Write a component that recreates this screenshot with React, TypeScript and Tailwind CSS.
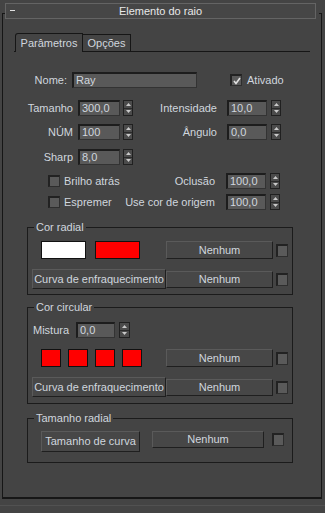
import React from "react";

const ink = "text-[#d0d6de]";

function Spinner({ className = "" }: { className?: string }) {
  return (
    <div className={`flex h-[16px] w-[10px] flex-col border border-[#202020] bg-[#4b4b4b] ${className}`}>
      <div className="flex flex-1 items-center justify-center border-b border-[#2a2a2a]">
        <svg width="5" height="3" viewBox="0 0 5 3">
          <path d="M0 3L2.5 0L5 3Z" fill="#c9c9c9" />
        </svg>
      </div>
      <div className="flex flex-1 items-center justify-center">
        <svg width="5" height="3" viewBox="0 0 5 3">
          <path d="M0 0L5 0L2.5 3Z" fill="#c9c9c9" />
        </svg>
      </div>
    </div>
  );
}

function Field({ value, className = "" }: { value: string; className?: string }) {
  return (
    <div
      className={`flex h-[16px] items-center border border-t-2 border-l-2 border-[#1d1d1d] border-r-[#333] border-b-[#333] bg-[#595959] pl-[2px] ${ink} ${className}`}
    >
      {value}
    </div>
  );
}

function Check({ checked = false, className = "" }: { checked?: boolean; className?: string }) {
  return (
    <div
      className={`flex h-[12px] w-[12px] items-center justify-center border border-t-2 border-l-2 border-[#222] border-r-[#2e2e2e] border-b-[#2e2e2e] bg-[#5a5a5a] ${className}`}
    >
      {checked && (
        <svg width="8" height="8" viewBox="0 0 8 8">
          <path d="M1 4L3 6.5L7 1" stroke="#e0e0e0" strokeWidth="1.6" fill="none" />
        </svg>
      )}
    </div>
  );
}

function Btn({ label, className = "" }: { label: string; className?: string }) {
  return (
    <div
      className={`flex items-center justify-center border border-[#5a5a5a] border-r-[#1f1f1f] border-b-[#1f1f1f] bg-[#474747] ${ink} ${className}`}
    >
      {label}
    </div>
  );
}

function Group({ title, className = "", children }: { title: string; className?: string; children: React.ReactNode }) {
  return (
    <div className={`relative ml-[24px] w-[266px] border border-[#1b1b1b] ${className}`}>
      <span className={`absolute -top-[8px] left-[6px] bg-[#444] px-[2px] leading-[14px] ${ink}`}>{title}</span>
      {children}
    </div>
  );
}

export default function App() {
  return (
    <div className="h-[513px] w-[325px] overflow-hidden bg-[#444] pt-[3px] font-['Liberation_Sans',Arial,sans-serif] text-[11px]">
      {/* title bar */}
      <div className="relative z-10 ml-[5px] flex h-[16px] w-[311px] items-center justify-center border border-[#646464] bg-[#464646]">
        <span className="absolute left-[4px] top-[6px] h-[1px] w-[5px] bg-[#e0e0e0]" />
        <span className="text-[#e8e8e8]">Elemento do raio</span>
      </div>

      {/* frame */}
      <div className="relative -mt-[6px] ml-[2px] h-[486px] w-[320px] border-x border-b-2 border-[#161616] pt-[20px]">
        <span className="absolute -left-[1px] top-0 h-[1px] w-[4px] bg-[#161616]" />
        <span className="absolute -right-[1px] top-0 h-[1px] w-[3px] bg-[#161616]" />

        {/* tabs */}
        <div className="ml-[11px] flex h-[19px] w-[296px] items-end border-b border-[#161616] pl-[1px]">
          <div className={`-mb-[1px] flex h-[19px] w-[68px] items-center justify-center rounded-tl-[3px] border-x border-t border-[#161616] bg-[#444] ${ink}`}>
            Parâmetros
          </div>
          <div className={`flex h-[17px] w-[48px] items-center justify-center border-r border-t border-[#161616] ${ink}`}>
            Opções
          </div>
        </div>

        {/* Nome */}
        <div className="mt-[20px] flex h-[16px] items-center">
          <span className={`w-[64px] text-right ${ink}`}>Nome:</span>
          <Field value="Ray" className="ml-[5px] w-[125px]" />
          <Check checked className="ml-[33px]" />
          <span className={`ml-[5px] ${ink}`}>Ativado</span>
        </div>

        {/* Tamanho / Intensidade */}
        <div className="mt-[12px] flex h-[16px] items-center">
          <span className={`w-[70px] text-right ${ink}`}>Tamanho</span>
          <Field value="300,0" className="ml-[5px] w-[42px]" />
          <Spinner className="ml-[3px]" />
          <span className={`w-[84px] text-right ${ink}`}>Intensidade</span>
          <Field value="10,0" className="ml-[10px] w-[40px]" />
          <Spinner className="ml-[4px]" />
        </div>

        {/* NÚM / Ângulo */}
        <div className="mt-[8px] flex h-[16px] items-center">
          <span className={`w-[70px] text-right ${ink}`}>NÚM</span>
          <Field value="100" className="ml-[5px] w-[42px]" />
          <Spinner className="ml-[3px]" />
          <span className={`w-[84px] text-right ${ink}`}>Ângulo</span>
          <Field value="0,0" className="ml-[10px] w-[40px]" />
          <Spinner className="ml-[4px]" />
        </div>

        {/* Sharp */}
        <div className="mt-[9px] flex h-[16px] items-center">
          <span className={`w-[70px] text-right ${ink}`}>Sharp</span>
          <Field value="8,0" className="ml-[5px] w-[42px]" />
          <Spinner className="ml-[3px]" />
        </div>

        {/* Brilho atrás / Oclusão */}
        <div className="mt-[8px] flex h-[16px] items-center">
          <div className="flex w-[122px] items-center">
            <Check className="ml-[45px]" />
            <span className={`ml-[4px] ${ink}`}>Brilho atrás</span>
          </div>
          <span className={`w-[90px] whitespace-nowrap text-right ${ink}`}>Oclusão</span>
          <Field value="100,0" className="ml-[11px] w-[40px]" />
          <Spinner className="ml-[4px]" />
        </div>

        {/* Espremer / Use cor de origem */}
        <div className="mt-[5px] flex h-[16px] items-center">
          <div className="flex w-[122px] items-center">
            <Check className="ml-[45px]" />
            <span className={`ml-[4px] ${ink}`}>Espremer</span>
          </div>
          <span className={`w-[90px] whitespace-nowrap text-right ${ink}`}>Use cor de origem</span>
          <Field value="100,0" className="ml-[11px] w-[40px]" />
          <Spinner className="ml-[4px]" />
        </div>

        {/* Cor radial */}
        <Group title="Cor radial" className="mt-[17px] pb-[5px] pt-[13px]">
          <div className="flex h-[18px] items-center">
            <div className="ml-[13px] h-[18px] w-[45px] border border-[#111] bg-white" />
            <div className="ml-[9px] h-[18px] w-[45px] border border-[#111] bg-[#ff0000]" />
            <Btn label="Nenhum" className="ml-[26px] h-[18px] w-[107px]" />
            <Check className="ml-[3px] h-[13px]" />
          </div>
          <div className="mt-[10px] flex h-[20px] items-center">
            <Btn label="Curva de enfraquecimento" className="ml-[4px] h-[20px] w-[134px] whitespace-nowrap" />
            <Btn label="Nenhum" className="h-[17px] w-[107px]" />
            <Check className="ml-[3px] h-[13px]" />
          </div>
        </Group>

        {/* Cor circular */}
        <Group title="Cor circular" className="mt-[12px] pb-[6px] pt-[14px]">
          <div className="flex h-[16px] items-center">
            <span className={`ml-[5px] w-[38px] ${ink}`}>Mistura</span>
            <Field value="0,0" className="ml-[5px] w-[39px]" />
            <Spinner className="ml-[4px] w-[11px]" />
          </div>
          <div className="mt-[11px] flex h-[18px] items-center">
            <div className="ml-[13px] h-[18px] w-[20px] border border-[#111] bg-[#ff0000]" />
            <div className="ml-[7px] h-[18px] w-[20px] border border-[#111] bg-[#ff0000]" />
            <div className="ml-[7px] h-[18px] w-[20px] border border-[#111] bg-[#ff0000]" />
            <div className="ml-[7px] h-[18px] w-[20px] border border-[#111] bg-[#ff0000]" />
            <Btn label="Nenhum" className="ml-[24px] h-[18px] w-[107px]" />
            <Check className="ml-[3px] h-[13px]" />
          </div>
          <div className="mt-[10px] flex h-[20px] items-center">
            <Btn label="Curva de enfraquecimento" className="ml-[4px] h-[20px] w-[134px] whitespace-nowrap" />
            <Btn label="Nenhum" className="h-[17px] w-[107px]" />
            <Check className="ml-[3px] h-[13px]" />
          </div>
        </Group>

        {/* Tamanho radial */}
        <Group title="Tamanho radial" className="mt-[14px] pb-[10px] pt-[12px]">
          <div className="flex h-[21px] items-start">
            <Btn label="Tamanho de curva" className="ml-[13px] h-[21px] w-[99px]" />
            <Btn label="Nenhum" className="ml-[12px] h-[17px] w-[112px]" />
            <Check className="ml-[8px] mt-[2px] h-[13px]" />
          </div>
        </Group>
      </div>

      <div className="mt-[6px] h-[1px] w-full bg-[#515151]" />
    </div>
  );
}
